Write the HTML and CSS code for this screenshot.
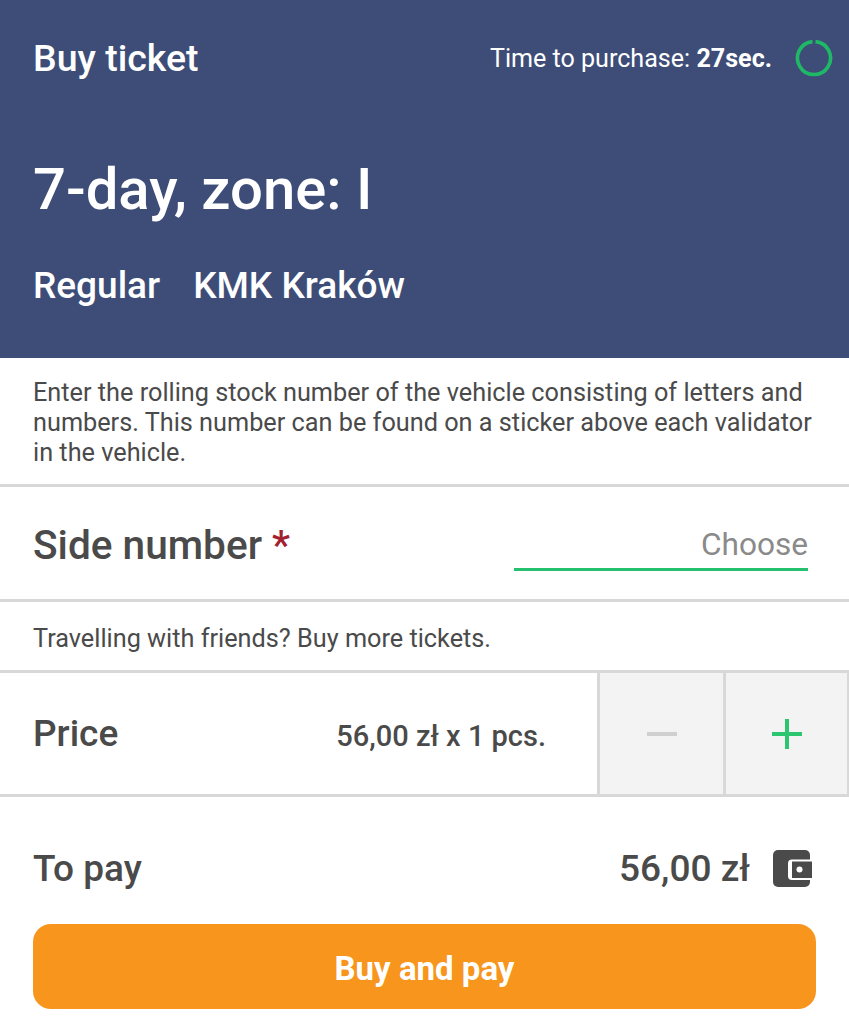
FILE: index.html
```html
<!DOCTYPE html>
<html lang="en">
<head>
  <meta charset="UTF-8" />
  <title>Buy ticket</title>
  <link rel="stylesheet" href="styles.css">
</head>
<body>

<header class="cabecera">
  <div class="fila-superior">
    <h1 class="titulo">Buy ticket</h1>
    <div class="tiempo">
      <span>Time to purchase: <b>27sec.</b></span>
      <svg class="anillo" width="38" height="38" viewBox="0 0 38 38">
        <path d="M20.500 2.600A16.500 16.500 0 1 1 17.500 2.600" fill="none" stroke="#1fb866" stroke-width="3.600" />
      </svg>
    </div>
  </div>
  <div class="billete">7-day, zone: I</div>
  <div class="detalles">
    <span>Regular</span>
    <span>KMK Kraków</span>
  </div>
</header>

<p class="texto aviso">Enter the rolling stock number of the vehicle consisting of letters and numbers. This number can be found on a sticker above each validator in the vehicle.</p>

<section class="fila-lateral">
  <div class="etiqueta-grande">Side number <span class="asterisco">*</span></div>
  <div class="campo">Choose</div>
</section>

<p class="texto amigos">Travelling with friends? Buy more tickets.</p>

<section class="fila-precio">
  <div class="etiqueta-precio">Price</div>
  <div class="cantidad">56,00 zł x 1 pcs.</div>
  <button type="button" class="paso paso-menos" aria-label="Less"><span class="signo"></span></button>
  <button type="button" class="paso paso-mas" aria-label="More"><span class="signo"></span></button>
</section>

<section class="fila-total">
  <div class="etiqueta-precio">To pay</div>
  <div class="total">
    <span>56,00 zł</span>
    <svg width="40" height="38" viewBox="0 0 40 38">
      <rect x="0" y="0" width="37" height="37" rx="5" fill="#4a4a4a" />
      <rect x="15" y="9.500" width="30" height="20.500" rx="4" fill="#fff" />
      <rect x="37" y="0" width="3" height="38" fill="#fff" />
      <rect x="19" y="11.500" width="20" height="16.500" fill="#4a4a4a" />
      <circle cx="26.500" cy="19.500" r="3" fill="#fff" />
    </svg>
  </div>
</section>

<div class="pie">
  <button type="button" class="comprar">Buy and pay</button>
</div>

</body>
</html>
```

FILE: styles.css
```css
body {
  margin: 0;
  background: #fff;
  color: #4a4a4a;
  font-family: Roboto, "Liberation Sans", sans-serif;
  height: 1024px;
  overflow: hidden;
}

.cabecera {
  background: #3d4d78;
  color: #fff;
  height: 358px;
  box-sizing: border-box;
  padding: 34px 16px 0 33px;
}

.fila-superior {
  display: flex;
  justify-content: space-between;
  align-items: center;
  height: 48px;
}

.titulo {
  margin: 0;
  font-size: 37.500px;
  font-weight: 500;
}

.tiempo {
  display: flex;
  align-items: center;
  gap: 23px;
  font-size: 25.100px;
}

.tiempo b {
  font-weight: 700;
}

.billete {
  margin-top: 72px;
  font-size: 58px;
  font-weight: 500;
  line-height: 70px;
}

.detalles {
  display: flex;
  gap: 33px;
  margin-top: 41px;
  font-size: 37px;
  font-weight: 500;
  line-height: 42px;
}

.texto {
  margin: 0;
  padding: 0 33px;
  font-size: 25.270px;
  line-height: 30px;
  border-bottom: 3px solid #d8d8d8;
}

.aviso {
  padding-top: 20px;
  padding-bottom: 16px;
  padding-right: 30px;
}

.amigos {
  padding-top: 22px;
  padding-bottom: 16px;
}

.fila-lateral {
  display: flex;
  justify-content: space-between;
  align-items: center;
  height: 108px;
  padding: 4px 41px 0 33px;
  border-bottom: 3px solid #d8d8d8;
}

.etiqueta-grande {
  font-size: 40.600px;
  font-weight: 500;
}

.asterisco {
  color: #a3212f;
}

.campo {
  width: 294px;
  box-sizing: border-box;
  padding: 0 0 5px;
  text-align: right;
  font-size: 31.600px;
  color: #8a8a8a;
  border-bottom: 3px solid #25c16f;
  margin-top: 7px;
}

.fila-precio {
  display: flex;
  align-items: center;
  height: 121px;
  padding-left: 33px;
  border-bottom: 3px solid #d8d8d8;
}

.etiqueta-precio {
  font-size: 37px;
  font-weight: 500;
}

.cantidad {
  margin-top: 4px;
  margin-left: auto;
  margin-right: 51px;
  font-size: 29px;
  font-weight: 500;
}

.paso {
  width: 126px;
  height: 100%;
  box-sizing: border-box;
  padding: 0;
  background: #f3f3f3;
  border: none;
  border-left: 3px solid #d8d8d8;
  display: flex;
  justify-content: center;
  align-items: center;
}

.paso-mas {
  border-right: 2px solid #d8d8d8;
}

.signo {
  display: block;
  width: 30px;
  height: 4px;
  position: relative;
  background: #d0d0d0;
}

.paso-mas .signo {
  background: #2bc66f;
}

.paso-mas .signo::after {
  content: "";
  position: absolute;
  left: 13px;
  top: -13px;
  width: 4px;
  height: 30px;
  background: #2bc66f;
}

.fila-total {
  display: flex;
  justify-content: space-between;
  align-items: center;
  height: 111px;
  padding: 16px 36px 0 33px;
}

.total {
  display: flex;
  align-items: center;
  gap: 23px;
  font-size: 37px;
  font-weight: 500;
}

.pie {
  padding: 0 33px;
}

.comprar {
  display: block;
  width: 100%;
  height: 85px;
  padding: 4px 0 0;
  border: none;
  border-radius: 18px;
  background: #f7951d;
  color: #fff;
  font-family: Roboto, "Liberation Sans", sans-serif;
  font-size: 33px;
  font-weight: 700;
}
```
